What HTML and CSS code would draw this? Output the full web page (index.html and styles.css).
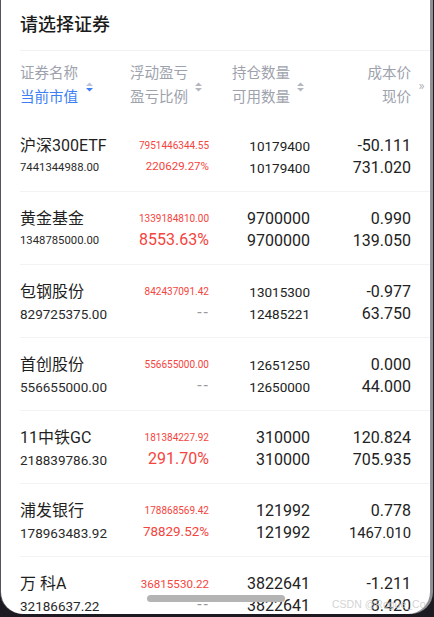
FILE: index.html
```html
<!DOCTYPE html>
<html lang="zh-CN">
<head>
<meta charset="utf-8">
<title>请选择证券</title>
<link rel="stylesheet" href="styles.css">
</head>
<body>
<div class="device">
  <div class="screen">
    <div class="title">请选择证券</div>

    <div class="head">
      <div class="hcell c1">
        <div class="htext"><div>证券名称</div><div class="active">当前市值</div></div>
        <svg class="sort" viewBox="0 0 7 10" width="7" height="10"><polygon class="up" points="0,4 3.5,0.5 7,4"/><polygon class="down on" points="0,6 7,6 3.5,9.5"/></svg>
      </div>
      <div class="hcell c2">
        <div class="htext"><div>浮动盈亏</div><div>盈亏比例</div></div>
        <svg class="sort" viewBox="0 0 7 10" width="7" height="10"><polygon class="up" points="0,4 3.5,0.5 7,4"/><polygon class="down" points="0,6 7,6 3.5,9.5"/></svg>
      </div>
      <div class="hcell c3">
        <div class="htext"><div>持仓数量</div><div>可用数量</div></div>
        <svg class="sort" viewBox="0 0 7 10" width="7" height="10"><polygon class="up" points="0,4 3.5,0.5 7,4"/><polygon class="down" points="0,6 7,6 3.5,9.5"/></svg>
      </div>
      <div class="hcell c4">
        <div class="htext right"><div>成本价</div><div>现价</div></div>
      </div>
      <div class="more">»</div>
    </div>

    <div class="row">
      <div class="cell left"><div class="name">沪深300ETF</div><div class="val sm">7441344988.00</div></div>
      <div class="cell"><div class="pl">7951446344.55</div><div class="pct xs">220629.27%</div></div>
      <div class="cell"><div class="qty sm">10179400</div><div class="qty sm">10179400</div></div>
      <div class="cell"><div class="price">-50.111</div><div class="price">731.020</div></div>
    </div>

    <div class="row">
      <div class="cell left"><div class="name">黄金基金</div><div class="val sm">1348785000.00</div></div>
      <div class="cell"><div class="pl">1339184810.00</div><div class="pct">8553.63%</div></div>
      <div class="cell"><div class="qty">9700000</div><div class="qty">9700000</div></div>
      <div class="cell"><div class="price">0.990</div><div class="price">139.050</div></div>
    </div>

    <div class="row">
      <div class="cell left"><div class="name">包钢股份</div><div class="val">829725375.00</div></div>
      <div class="cell"><div class="pl">842437091.42</div><div class="dash">--</div></div>
      <div class="cell"><div class="qty sm">13015300</div><div class="qty sm">12485221</div></div>
      <div class="cell"><div class="price">-0.977</div><div class="price">63.750</div></div>
    </div>

    <div class="row">
      <div class="cell left"><div class="name">首创股份</div><div class="val">556655000.00</div></div>
      <div class="cell"><div class="pl">556655000.00</div><div class="dash">--</div></div>
      <div class="cell"><div class="qty sm">12651250</div><div class="qty sm">12650000</div></div>
      <div class="cell"><div class="price">0.000</div><div class="price">44.000</div></div>
    </div>

    <div class="row">
      <div class="cell left"><div class="name">11中铁GC</div><div class="val">218839786.30</div></div>
      <div class="cell"><div class="pl">181384227.92</div><div class="pct">291.70%</div></div>
      <div class="cell"><div class="qty">310000</div><div class="qty">310000</div></div>
      <div class="cell"><div class="price">120.824</div><div class="price">705.935</div></div>
    </div>

    <div class="row">
      <div class="cell left"><div class="name">浦发银行</div><div class="val">178963483.92</div></div>
      <div class="cell"><div class="pl">178868569.42</div><div class="pct md">78829.52%</div></div>
      <div class="cell"><div class="qty">121992</div><div class="qty">121992</div></div>
      <div class="cell"><div class="price">0.778</div><div class="price sm">1467.010</div></div>
    </div>

    <div class="row">
      <div class="cell left"><div class="name">万 科A</div><div class="val">32186637.22</div></div>
      <div class="cell"><div class="pl lg">36815530.22</div><div class="dash">--</div></div>
      <div class="cell"><div class="qty">3822641</div><div class="qty">3822641</div></div>
      <div class="cell"><div class="price">-1.211</div><div class="price">8.420</div></div>
    </div>

    <div class="watermark">CSDN @Rogue_Coder</div>
    <div class="home-bar"></div>
  </div>
</div>
</body>
</html>
```

FILE: styles.css
```css
* { box-sizing: border-box; }

html, body {
  margin: 0;
  padding: 0;
}

body {
  width: 434px;
  height: 617px;
  overflow: hidden;
  background: #1d1b21;
  font-family: Roboto, "Noto Sans CJK SC", sans-serif;
}

.device {
  width: 434px;
  height: 617px;
  padding-left: 1px;
}

.screen {
  position: relative;
  width: 429px;
  height: 614px;
  background: #ffffff;
  border-radius: 0 0 22px 22px;
  overflow: hidden;
  box-shadow: 3px 0 0 #8f8f94, -1px 0 0 #55535b;
}

.title {
  margin-left: 19px;
  height: 51px;
  line-height: 50px;
  font-size: 18px;
  font-weight: 500;
  color: #1b1b1b;
  border-bottom: 1px solid #f2f2f3;
}

.head {
  margin-left: 19px;
  padding: 11px 0 9px;
  display: grid;
  grid-template-columns: 90px 99px 101px 101px 19px;
  align-items: center;
  font-size: 14.5px;
  color: #9da2ac;
}

.hcell {
  display: flex;
  align-items: center;
}

.hcell.c1 { gap: 8px; }
.hcell.c2 { justify-content: flex-end; gap: 7px; padding-right: 7px; }
.hcell.c3 { justify-content: flex-end; gap: 7px; padding-right: 6px; }
.hcell.c4 { justify-content: flex-end; }

.htext {
  line-height: 24px;
  white-space: nowrap;
}

.htext.right { text-align: right; }

.htext .active { color: #3c7ff5; }

.sort { display: block; margin-top: 1px; }
.sort polygon { fill: #b3b7bf; }
.sort .up { fill: #b9c4d8; }
.hcell.c2 .sort polygon, .hcell.c3 .sort polygon { fill: #b3b7bf; }
.sort .down.on { fill: #3c7ff5; }

.more {
  font-size: 13px;
  color: #b0b0b4;
  text-align: center;
  padding-left: 2px;
  line-height: 24px;
}

.row {
  margin-left: 19px;
  padding: 16px 19px 12px 0;
  display: grid;
  grid-template-columns: 90px 99px 101px 101px;
  border-bottom: 1px solid #f3f3f4;
}

.cell {
  text-align: right;
  white-space: nowrap;
}

.cell.left { text-align: left; }

.cell > div {
  height: 22px;
  line-height: 22px;
}

.name {
  font-size: 16px;
  color: #1f1f1f;
}

.val {
  font-size: 13.5px;
  color: #2a2a2a;
}
.val.sm { font-size: 11.3px; }

.pl {
  font-size: 10px;
  color: #f5443e;
}
.pl.lg { font-size: 11.6px; }

.pct {
  font-size: 16px;
  color: #f5443e;
  line-height: 19px !important;
}
.pct.md { font-size: 13.4px; }
.pct.xs { font-size: 11.5px; }

.dash {
  font-size: 16px;
  color: #9a9a9a;
  letter-spacing: 2px;
  margin-right: -1px;
  line-height: 19px !important;
}

.qty {
  font-size: 16px;
  color: #222222;
}
.qty.sm { font-size: 13.5px; }

.price {
  font-size: 16px;
  color: #222222;
}
.price.sm { font-size: 14.8px; }

.watermark {
  position: absolute;
  left: 331px;
  top: 598px;
  font-family: "Liberation Sans", Arial, sans-serif;
  font-size: 10.5px;
  color: rgba(200, 200, 200, 0.8);
  white-space: nowrap;
}

.home-bar {
  position: absolute;
  left: 146px;
  top: 595px;
  width: 138px;
  height: 7px;
  border-radius: 4px;
  background: #b4b4b4;
}
```
